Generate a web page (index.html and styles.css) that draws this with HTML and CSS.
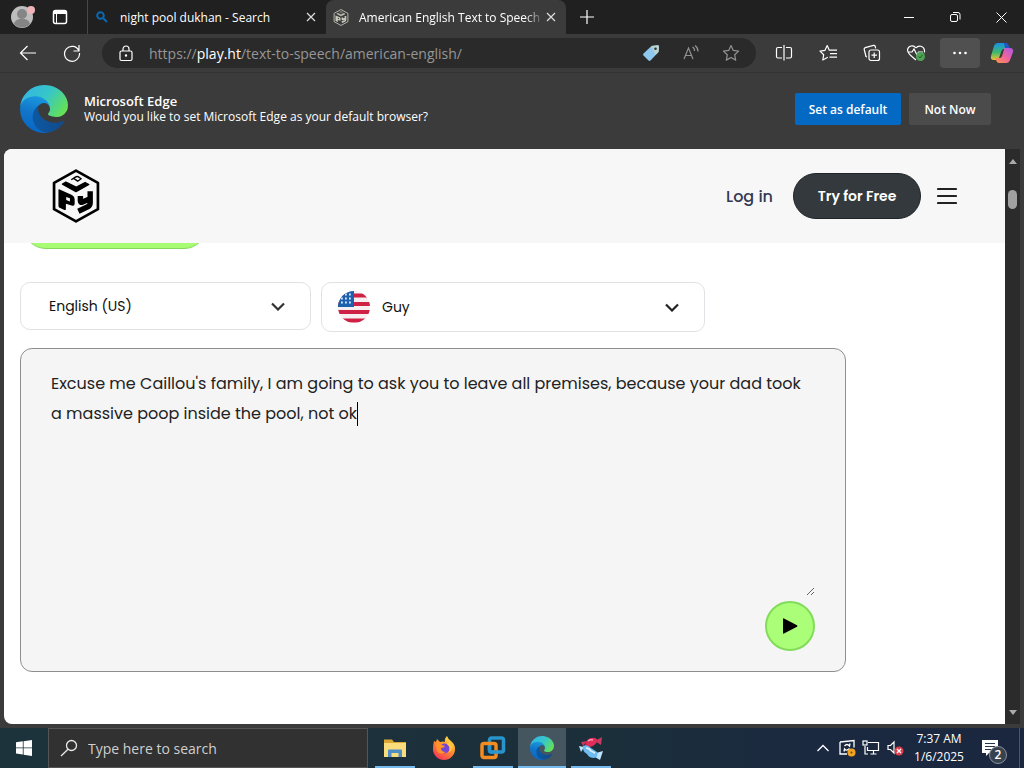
FILE: index.html
```
<!DOCTYPE html>
<html lang="en">
<head>
  <meta charset="UTF-8">
  <meta name="viewport" content="width=device-width, initial-scale=1.0">
  <title>American English Text to Speech</title>
  <link rel="stylesheet" href="styles.css">
</head>
<body>
  <!-- Shared logos -->
  <svg class="defs" width="0" height="0" aria-hidden="true">
    <defs>
      <linearGradient id="edgeDark" x1="0" y1="0.6" x2="1" y2="0.6"><stop offset="0" stop-color="#0c59a4"/><stop offset="1" stop-color="#114a8b"/></linearGradient>
      <linearGradient id="edgeBlue" x1="0.6" y1="0" x2="0.4" y2="1"><stop offset="0" stop-color="#1b9de2"/><stop offset="0.5" stop-color="#1275c8"/><stop offset="1" stop-color="#0667c5"/></linearGradient>
      <linearGradient id="edgeGreen" x1="0" y1="0.2" x2="1" y2="0.7"><stop offset="0" stop-color="#35b5e5"/><stop offset="0.5" stop-color="#36c6c8"/><stop offset="1" stop-color="#66e252"/></linearGradient>
      <symbol id="edge" viewBox="0 0 256 256">
        <path fill="url(#edgeDark)" d="M231 190.5c-3.4 1.8-6.9 3.4-10.5 4.7a101.9 101.9 0 0 1-35.9 6.4c-47.3 0-88.5-32.5-88.5-74.3a31.5 31.5 0 0 1 16.4-27.3c-42.8 1.8-53.8 46.4-53.8 72.5 0 74 68.1 81.4 82.8 81.4 7.9 0 19.8-2.3 27-4.6l1.3-.4a128.3 128.3 0 0 0 66.6-52.8 4 4 0 0 0-5.4-5.6z"/>
        <path fill="url(#edgeBlue)" d="M105.7 241.4a79.2 79.2 0 0 1-22.7-21.3 80.7 80.7 0 0 1 29.5-120c3.2-1.5 8.5-4.2 15.6-4.1a32.4 32.4 0 0 1 25.7 13 31.9 31.9 0 0 1 6.3 18.7c0-.2 24.5-79.6-80-79.6-43.9 0-80 41.7-80 78.2a130.2 130.2 0 0 0 12.1 56 128 128 0 0 0 156.4 67 75.5 75.5 0 0 1-62.8-8z"/>
        <path fill="url(#edgeGreen)" d="M152.3 148.9c-.9 1-3.4 2.5-3.4 5.6 0 2.6 1.7 5.2 4.8 7.3 14.3 10 41.4 8.6 41.5 8.6a59.6 59.6 0 0 0 30.3-8.3 61.4 61.4 0 0 0 30.4-52.9c.3-22.4-8-37.3-11.3-43.9C223.5 23.9 177.7 0 128 0A128 128 0 0 0 0 126.2c.5-36.5 36.8-66 80-66 3.5 0 23.5.3 42 10a72.6 72.6 0 0 1 30.9 29.3c6.1 10.6 7.2 24.1 7.2 29.5s-2.7 13.3-7.8 19.9z"/>
      </symbol>
      <symbol id="cube" viewBox="0 0 140 160">
        <path d="M70 5 135 41V119L70 155 5 119V41Z" fill="none" stroke="currentColor" stroke-width="8" stroke-linejoin="round"/>
        <path d="M30 45 40 39 70 54 97 40 108 46 70 67Z" fill="currentColor" stroke="currentColor" stroke-width="4" stroke-linejoin="round"/>
        <path d="M56 32 68 24Q74 20 80 25L85 29 74 37M62 27 75 36" fill="none" stroke="currentColor" stroke-width="4"/>
        <path fill-rule="evenodd" d="M20 60 58 77Q66 81 66 89V103Q66 111 57 108L40 103V119Q39 123 34 121L20 114Q18 112 18 109V62Q18 59 20 60ZM41 83V92L52 96V87Z" fill="currentColor"/>
        <path d="M83 80V95Q83 101 89 98L112 88M77 125 105 112Q112 108 112 101V66" fill="none" stroke="currentColor" stroke-width="16" stroke-linejoin="round"/>
      </symbol>
    </defs>
  </svg>

  <!-- Tabs -->
  <header class="titlebar">
    <button class="icon-btn profile" aria-label="Profile">
      <svg width="26" height="26" viewBox="0 0 26 26"><circle cx="13" cy="13" r="11" fill="#bdbdbd"/><circle cx="13" cy="10" r="5" fill="#858585"/><path d="M5 20c1-7 15-7 16 0a11 11 0 0 1-16 0z" fill="#858585"/><circle cx="22" cy="6" r="4" fill="#efb3b8"/></svg>
    </button>
    <button class="icon-btn workspaces" aria-label="Tab actions">
      <svg width="16" height="16" viewBox="0 0 16 16" fill="none" stroke="#fff" stroke-width="1.5"><rect x="1.5" y="1.5" width="13" height="13" rx="2"/><path d="M2 3.5h12" stroke-width="3"/><path d="M4.500 5v9" stroke-width="1"/></svg>
    </button>
    <div class="tab">
      <svg width="12" height="12" viewBox="0 0 12 12" fill="none" stroke="#0b67ae" stroke-width="2"><circle cx="4.5" cy="4.5" r="3.3"/><path d="M7 7l4 4"/></svg>
      <span class="tab-title">night pool dukhan - Search</span>
      <button class="icon-btn close" aria-label="Close tab"><svg width="10" height="10" viewBox="0 0 10 10"><path d="M1 1l8 8M9 1l-8 8" stroke="#ddd" stroke-width="1.2"/></svg></button>
    </div>
    <div class="tab active">
      <svg class="favicon" width="16" height="17"><use href="#cube"/></svg>
      <span class="tab-title">American English Text to Speech</span>
      <button class="icon-btn close" aria-label="Close tab"><svg width="10" height="10" viewBox="0 0 10 10"><path d="M1 1l8 8M9 1l-8 8" stroke="#ddd" stroke-width="1.2"/></svg></button>
    </div>
    <button class="icon-btn new-tab" aria-label="New tab"><svg width="14" height="14" viewBox="0 0 14 14"><path d="M7 0v14M0 7h14" stroke="#fff" stroke-width="1.2"/></svg></button>
    <div class="window-buttons">
      <button class="icon-btn" aria-label="Minimize"><svg width="10" height="10" viewBox="0 0 10 10"><path d="M0 5.5h10" stroke="#fff"/></svg></button>
      <button class="icon-btn" aria-label="Restore"><svg width="12" height="12" viewBox="0 0 12 12" fill="none" stroke="#fff"><rect x="1.5" y="3.5" width="7" height="7" rx="1.5"/><path d="M4 1.5h5a2 2 0 0 1 2 2v5"/></svg></button>
      <button class="icon-btn" aria-label="Close"><svg width="11" height="11" viewBox="0 0 11 11"><path d="M.5.5l10 10M10.500.5l-10 10" stroke="#fff"/></svg></button>
    </div>
  </header>

  <!-- Address bar -->
  <nav class="toolbar">
    <button class="icon-btn back" aria-label="Back"><svg width="18" height="16" viewBox="0 0 18 16" fill="none" stroke="#fff" stroke-width="1.2"><path d="M17 8H2M8.500 1 1.500 8l7 7"/></svg></button>
    <button class="icon-btn reload" aria-label="Refresh"><svg width="18" height="18" viewBox="0 0 18 18" fill="none" stroke="#fff" stroke-width="1.2"><path d="M16 7A7.500 7.500 0 1 0 16.500 9M16 1v6h-5.500"/></svg></button>
    <div class="address">
      <button class="icon-btn" aria-label="Site information"><svg width="14" height="17" viewBox="0 0 14 17" fill="none" stroke="#fff" stroke-width="1.200"><rect x="1" y="6" width="12" height="9.500" rx="1.500"/><path d="M4 6V4a3 3 0 0 1 6 0v2"/><circle cx="7" cy="10.500" r=".6" fill="#fff"/></svg></button>
      <div class="url" role="textbox" aria-label="Address" contenteditable="true" spellcheck="false">https://<b>play.ht</b>/text-to-speech/american-english/</div>
      <button class="icon-btn" aria-label="Shopping"><svg width="18" height="18" viewBox="0 0 18 18"><path d="M1.500 9.500 9.500 2l6-.8q1.400 0 1.500 1.400L16.500 8 8.500 16.500q-1 .8-2 0l-5-5q-.8-1 0-2z" fill="#8fc8ee"/><path d="M9.500 2l6-.8q1.400 0 1.500 1.400L16.500 8l-3 3z" fill="#bcd4cd"/><circle cx="13.500" cy="4.700" r="1.300" fill="#333"/></svg></button>
      <button class="icon-btn" aria-label="Read aloud"><svg width="18" height="18" viewBox="0 0 18 18" fill="none" stroke="#929292" stroke-width="1.200"><path d="M2 15 6.500 4 11 15M3.500 11.500h6M10.500 3a4 4 0 0 1 2 4M13 1.500a7 7 0 0 1 3 6"/></svg></button>
      <button class="icon-btn" aria-label="Add to favorites"><svg width="18" height="18" viewBox="0 0 18 18" fill="none" stroke="#929292" stroke-width="1.200"><path d="M9 1.500l2.300 4.900 5.300.7-3.900 3.700 1 5.300L9 13.500l-4.700 2.600 1-5.300L1.400 7.100l5.300-.7z" stroke-linejoin="round"/></svg></button>
    </div>
    <div class="tools">
      <button class="icon-btn" aria-label="Split screen"><svg width="18" height="18" viewBox="0 0 18 18" fill="none" stroke="#fff" stroke-width="1.200"><path d="M7 3.500H3q-1.500 0-1.500 1.500v7.500Q1.500 14 3 14h4M11 3.500h4q1.500 0 1.500 1.500v7.500q0 1.500-1.500 1.500h-4M9 1v15.500"/></svg></button>
      <button class="icon-btn" aria-label="Favorites"><svg width="19" height="18" viewBox="0 0 19 18" fill="none" stroke="#fff" stroke-width="1.200"><path d="M11 6.200h-.7L8.200 1.500 6 6.300l-5 .8 3.700 3.600-.9 5.300 5-2.700M11 6.200h7M11 9.700h7M10.500 13.200H18" stroke-linejoin="round"/></svg></button>
      <button class="icon-btn" aria-label="Collections"><svg width="18" height="18" viewBox="0 0 18 18" fill="none" stroke="#fff" stroke-width="1.200"><path d="M4 13 3 12.500 1.200 5.500q-.3-1.500 1-1.900L10.500 1.300q1.300-.2 1.700 1l.5 2"/><rect x="6" y="6" width="10.500" height="10.500" rx="2"/><path d="M11.200 8.500v5.500M8.500 11.200H14"/></svg></button>
      <button class="icon-btn" aria-label="Browser essentials"><svg width="20" height="18" viewBox="0 0 20 18"><path d="M10 4C7.500.5 2 1.500 1.500 6c0 4 5 7 8.500 10M10 4c2.500-3.500 8-2 8.500 2.500v2M1.500 8H6l2-3 3 6 1.500-3H17" fill="none" stroke="#fff" stroke-width="1.200"/><circle cx="14.500" cy="12.500" r="4.500" fill="#4ea253"/><path d="M12.500 12.500l1.500 1.500 2.500-3" fill="none" stroke="#235b29"/></svg></button>
      <button class="icon-btn more" aria-label="Settings and more"><svg width="16" height="4" viewBox="0 0 16 4" fill="#fff"><circle cx="2.500" cy="2" r="1.300"/><circle cx="8" cy="2" r="1.300"/><circle cx="13.500" cy="2" r="1.300"/></svg></button>
      <button class="icon-btn copilot" aria-label="Copilot"><svg width="24" height="22" viewBox="0 0 24 22">
        <defs><linearGradient id="cpA" x1="0" y1="0" x2="0" y2="1"><stop offset="0" stop-color="#1790e8"/><stop offset=".55" stop-color="#3eb96e"/><stop offset="1" stop-color="#efc42c"/></linearGradient><linearGradient id="cpB" x1="1" y1="0" x2="0" y2="1"><stop offset="0" stop-color="#a85ae8"/><stop offset=".5" stop-color="#ee62a0"/><stop offset="1" stop-color="#ff9845"/></linearGradient></defs>
        <path d="M8 1h7q2 0 2.600 2L19 7h-5q-2 0-2.600 2L9 16q-.6 2-3 2H4q-4 0-3-4L4 4q1-3 4-3z" fill="url(#cpA)"/><path d="M16 21H9q-2 0-2.600-2L5.500 16h4q2 0 2.600-2L14.500 6h5Q24 6 23 10l-3 8q-1 3-4 3z" fill="url(#cpB)"/><path d="M14 1h2q2 0 2.500 2L19.500 6H15z" fill="#2557c2"/></svg></button>
    </div>
  </nav>

  <!-- Default browser prompt -->
  <section class="infobar">
    <svg class="edge-logo" width="48" height="48"><use href="#edge"/></svg>
    <div class="infobar-text">
      <strong>Microsoft Edge</strong>
      <span>Would you like to set Microsoft Edge as your default browser?</span>
    </div>
    <button class="primary">Set as default</button>
    <button class="secondary">Not Now</button>
  </section>

  <!-- Web page -->
  <div class="viewport">
    <div class="page">
      <div class="site-header">
        <a href="#" class="site-logo" aria-label="PlayHT"><svg width="48" height="54"><use href="#cube"/></svg></a>
        <a href="#" class="login">Log in</a>
        <a href="#" class="try">Try for Free</a>
        <button class="icon-btn menu" aria-label="Menu"><svg width="20" height="18" viewBox="0 0 20 18"><path d="M1 2h18M1 9h18M1 16h18" stroke="#222" stroke-width="2.200" stroke-linecap="round"/></svg></button>
      </div>
      <main class="content">
        <button class="cta" aria-label="Get started"></button>
        <div class="pickers">
          <div class="picker language">
            <select aria-label="Language"><option>English (US)</option></select>
            <svg width="14" height="9" viewBox="0 0 14 9"><path d="M1 1.500l6 6 6-6" fill="none" stroke="#333" stroke-width="2.200"/></svg>
          </div>
          <div class="picker voice">
            <svg class="flag" width="32" height="32" viewBox="0 0 32 32">
              <clipPath id="round"><circle cx="16" cy="16" r="16"/></clipPath>
              <g clip-path="url(#round)"><path fill="#f6eef0" d="M0 0h32v32H0z"/><path d="M0 4.500h32M0 13h32M0 21h32M0 29.500h32" stroke="#cf2145" stroke-width="4.200"/><path fill="#1c60ae" d="M0 0h16v16H0z"/><path d="M3 7.500h12M3 11.500h12M7 3.500h8" stroke="#d8eaff" stroke-width="1.800" stroke-dasharray="1.800 2.200"/></g>
            </svg>
            <select aria-label="Voice"><option>Guy</option></select>
            <svg width="14" height="9" viewBox="0 0 14 9"><path d="M1 1.500l6 6 6-6" fill="none" stroke="#222" stroke-width="2.200"/></svg>
          </div>
        </div>
        <div class="editor">
          <textarea aria-label="Text to speak" spellcheck="false">Excuse me Caillou's family, I am going to ask you to leave all premises, because your dad took a massive poop inside the pool, not ok</textarea>
          <span class="caret"></span>
          <button class="play" aria-label="Play"><svg width="16" height="18" viewBox="0 0 16 18"><path d="M1 2v14q0 1 1 .5L15 9.700q1-.7 0-1.400L2 1.500Q1 1 1 2z"/></svg></button>
        </div>
      </main>
    </div>
    <div class="scrollbar">
      <span class="arrow up"></span>
      <span class="thumb"></span>
      <span class="arrow down"></span>
    </div>
  </div>

  <!-- Windows taskbar -->
  <footer class="taskbar">
    <button class="icon-btn start" aria-label="Start"><svg width="16" height="16" viewBox="0 0 16 16" fill="#fff"><path d="M0 2.300 6.800 1.300v6.200H0zM7.600 1.200 16 0v7.500H7.600zM0 8.300h6.800v6.300L0 13.600zM7.600 8.300H16V16l-8.400-1.200z"/></svg></button>
    <label class="search">
      <svg width="18" height="18" viewBox="0 0 18 18" fill="none" stroke="#e8e8e8" stroke-width="1.300"><circle cx="11.500" cy="6.500" r="5"/><path d="M8 10.200 1 17"/></svg>
      <input type="text" placeholder="Type here to search" aria-label="Search">
    </label>
    <div class="apps">
      <button class="app open" aria-label="File Explorer"><svg width="24" height="22" viewBox="0 0 24 22"><path d="M1 2.500h8l2 2.500h12v15H1z" fill="#dba733"/><path d="M1 6h22v14H1z" fill="#f9dc7c"/><path d="M5 20v-6.500q0-1 1-1h12q1 0 1 1V20h-3.500v-4h-7v4z" fill="#4f8ec4"/></svg></button>
      <button class="app" aria-label="Firefox"><svg width="24" height="24" viewBox="0 0 24 24">
        <defs><linearGradient id="fx" x1=".8" y1="0" x2=".2" y2="1"><stop offset="0" stop-color="#ffe450"/><stop offset=".4" stop-color="#ff9b28"/><stop offset="1" stop-color="#f52d5d"/></linearGradient></defs>
        <path d="M2 5l2 1 1-3 3 3q3-1 5 0-1-3 2-6 1 3 4 5 4 3 4 8a11 11 0 0 1-22 0q0-4 1-8z" fill="url(#fx)"/><circle cx="12.500" cy="12.500" r="5" fill="#7545d6"/><path d="M4 8q4-2 6 1l3 1q-1 2-4 2 0 4 5 4-6 4-9-1z" fill="#ff922b"/><path d="M15 8q5 4 1 9 6-3 4-9l-3-3z" fill="#ffc83e"/></svg></button>
      <button class="app open" aria-label="VMware"><svg width="26" height="24" viewBox="0 0 26 24" fill="none" stroke-width="3.500"><rect x="9.500" y="2" width="14" height="14" rx="2" stroke="#2993cb"/><rect x="2" y="7.500" width="14" height="14" rx="2" stroke="#f28b20"/><path d="M9.500 10V14q0 2 2 2h6" stroke="#2993cb"/></svg></button>
      <button class="app open current" aria-label="Microsoft Edge"><svg width="24" height="24"><use href="#edge"/></svg></button>
      <button class="app open" aria-label="Candy"><svg width="24" height="24" viewBox="0 0 24 24"><path d="M8 5 4 10l-2-4zM16 5l7-4-1 8z" fill="#c93a61"/><path d="M7 6q3-5 9-4 3 1 2 4-3 5-9 5-4-1-2-5z" fill="#e02c58"/><path d="M5 11 0 10l2 6zM17 17l7-2-3 9-5-3z" fill="#bde5ff"/><path d="M4 10q4-2 8 2l6 4q2 5-3 6-5 0-7-4-5-3-4-8z" fill="#6fbcf3"/><path d="M9 5q2-2 5-1" stroke="#f9a0b8" stroke-width="1.500" fill="none"/><path d="M7 12q3 0 5 3l4 2" stroke="#e4f5ff" stroke-width="1.500" fill="none"/></svg></button>
    </div>
    <div class="tray">
      <button class="icon-btn" aria-label="Show hidden icons"><svg width="14" height="8" viewBox="0 0 14 8"><path d="M1.500 7 7 1.500 12.500 7" fill="none" stroke="#fff" stroke-width="1.300"/></svg></button>
      <button class="icon-btn" aria-label="Updates"><svg width="17" height="18" viewBox="0 0 17 18"><path d="M1 3l14-1.500v7M1 3v12h7" fill="none" stroke="#fff" stroke-width="1.300"/><path d="M5.500 7q2.500-3 5 0l.5-2.500M10.500 9.500q-3 3-5 .5l-.5 2.500" fill="none" stroke="#fff" stroke-width="1.300"/><circle cx="12.500" cy="13.500" r="4" fill="#f2a422"/><circle cx="12.500" cy="13.500" r="1" fill="#6b4a12"/></svg></button>
      <button class="icon-btn" aria-label="Network"><svg width="18" height="16" viewBox="0 0 18 16" fill="none" stroke="#fff" stroke-width="1.200"><path d="M6 2.500h10.500v8h-11V7M8.500 14h6M11.500 10.500V14M3 6v8h3"/><rect x="1" y="1" width="4" height="4"/></svg></button>
      <button class="icon-btn" aria-label="Volume"><svg width="17" height="16" viewBox="0 0 17 16"><path d="M1 5.500h2.500L7 2v11L3.500 9.500H1z" fill="none" stroke="#fff" stroke-width="1.200"/><circle cx="12" cy="11" r="4.500" fill="#dc3d4b"/><path d="M10 9l4 4M14 9l-4 4" stroke="#fff" stroke-width="1.300"/></svg></button>
      <div class="clock"><span>7:37 AM</span><span>1/6/2025</span></div>
      <button class="icon-btn notifications" aria-label="Notifications"><svg width="20" height="18" viewBox="0 0 20 18"><path d="M1 1h16v13h-9l-3 3v-3H1z" fill="#fff"/><path d="M4 4.500h10M4 7.500h10M4 10.500h6" stroke="#26364a" stroke-width="1.200"/></svg><span class="badge">2</span></button>
    </div>
  </footer>
</body>
</html>
```
FILE: styles.css
```
* {
  box-sizing: border-box;
}

body {
  margin: 0;
  height: 100vh;
  display: flex;
  flex-direction: column;
  overflow: hidden;
  background-color: #3b3b3b;
  color: #fff;
  font-family: 'Segoe UI', 'Open Sans', sans-serif;
  font-size: 12px;
}

button {
  font: inherit;
  color: inherit;
  border: none;
  padding: 0;
  cursor: pointer;
}

a {
  text-decoration: none;
}

svg {
  display: block;
  flex-shrink: 0;
}

.defs {
  position: absolute;
}

.icon-btn {
  display: flex;
  align-items: center;
  justify-content: center;
  flex-shrink: 0;
  background: none;
}

/* Tabs */
.titlebar {
  display: flex;
  height: 34px;
  background-color: #202020;
}

.profile {
  width: 44px;
}

.workspaces {
  width: 32px;
}

.tab {
  display: flex;
  align-items: center;
  width: 239px;
  margin-left: 11px;
  padding: 0 10px 0 8px;
  border-left: 1px solid #484848;
  gap: 12px;
}

.tab.active {
  width: 240px;
  margin: 0;
  padding-left: 7px;
  gap: 10px;
  border: none;
  border-radius: 8px 8px 0 0;
  background-color: #3b3b3b;
}

.tab-title {
  flex: 1;
  overflow: hidden;
  white-space: nowrap;
}

.tab.active .tab-title {
  margin-right: -8px;
  -webkit-mask-image: linear-gradient(to right, #000 90%, transparent);
  mask-image: linear-gradient(to right, #000 90%, transparent);
}

.favicon {
  color: #c8c8bd;
}

.new-tab {
  width: 42px;
}

.window-buttons {
  display: flex;
  margin-left: auto;
}

.window-buttons .icon-btn {
  width: 46px;
}

/* Address bar */
.toolbar {
  display: flex;
  align-items: center;
  height: 38px;
  padding: 0 2px 0 6px;
}

.back,
.reload {
  width: 44px;
  height: 32px;
}

.address {
  flex: 1;
  display: flex;
  align-items: center;
  height: 30px;
  margin-left: 8px;
  padding: 0 5px 0 6px;
  border-radius: 15px;
  background-color: #2a2a2a;
}

.address .icon-btn {
  width: 40px;
}

.address .icon-btn:first-child {
  width: 36px;
  margin-right: 5px;
}

.url {
  flex: 1;
  color: #969696;
  font-size: 14px;
  white-space: nowrap;
  outline: none;
}

.url b {
  color: #fff;
  font-weight: 500;
}

.tools {
  display: flex;
  align-items: center;
  margin-left: 6px;
}

.tools .icon-btn {
  width: 44px;
  height: 30px;
}

.tools .more {
  width: 40px;
  margin: 0 2px;
  border-radius: 4px;
  background-color: #505050;
}

.tools .copilot {
  width: 40px;
}

/* Default browser prompt */
.infobar {
  display: flex;
  align-items: center;
  height: 77px;
  padding: 0 33px 4px 20px;
  border-top: 1px solid #333;
}

.infobar-text {
  flex: 1;
  display: flex;
  flex-direction: column;
  margin-left: 16px;
  line-height: 16px;
}

.infobar-text strong {
  font-size: 13px;
  font-weight: 600;
}

.primary,
.secondary {
  height: 32px;
  border-radius: 2px;
  font-weight: 600;
}

.primary {
  width: 106px;
  background-color: #0469c3;
}

.secondary {
  width: 82px;
  margin-left: 8px;
  background-color: #4b4b4b;
}

/* Web page */
.viewport {
  flex: 1;
  display: flex;
  min-height: 0;
  padding: 0 4px 4px;
}

.page {
  flex: 1;
  display: flex;
  flex-direction: column;
  overflow: hidden;
  border-radius: 8px 0 0 8px;
  background-color: #fff;
  color: #111;
  font-family: 'Poppins', 'Inter', sans-serif;
}

.site-header {
  display: flex;
  align-items: center;
  height: 94px;
  flex-shrink: 0;
  padding: 0 48px;
  background-color: #f7f7f7;
}

.site-logo {
  margin-right: auto;
  color: #000;
}

.login {
  color: #333952;
  font-size: 16px;
  font-weight: 500;
}

.try {
  width: 128px;
  margin: 0 16px 0 20px;
  border: 1px solid #202428;
  border-radius: 23px;
  background-color: #33393c;
  color: #fff;
  font-size: 14px;
  font-weight: 600;
  line-height: 44px;
  text-align: center;
}

.content {
  flex: 1;
  overflow: hidden;
  padding: 0 16px;
}

.cta {
  display: block;
  width: 184px;
  height: 46px;
  margin: -40px 0 0 3px;
  border: 1px solid #84d85c;
  border-radius: 23px;
  background-color: #a8fc74;
}

.pickers {
  display: flex;
  align-items: flex-start;
  gap: 10px;
  margin: 33px 0 16px;
}

.picker {
  display: flex;
  align-items: center;
  border: 1px solid #e2e2e6;
  border-radius: 10px;
  background-color: #fff;
}

.picker select {
  flex: 1;
  appearance: none;
  border: none;
  padding: 0;
  background: none;
  color: #111;
  font-family: inherit;
  font-size: 14px;
}

.language {
  width: 291px;
  height: 48px;
  padding: 0 25px 0 28px;
}

.voice {
  width: 384px;
  height: 50px;
  padding: 0 25px 0 16px;
}

.flag {
  margin-right: 12px;
}

.editor {
  position: relative;
  display: flex;
  flex-direction: column;
  max-width: 826px;
  padding: 20px 30px;
  border: 1px solid #8e8e8e;
  border-radius: 12px;
  background-color: #f5f5f5;
}

.editor textarea {
  height: 227px;
  margin-bottom: 5px;
  padding: 0 8px 0 0;
  border: none;
  outline: none;
  background: none;
  color: #222;
  font-family: inherit;
  font-size: 16px;
  font-weight: 400;
  line-height: 30px;
}

.caret {
  position: absolute;
  left: 336px;
  top: 53px;
  width: 1px;
  height: 24px;
  background-color: #000;
}

.play {
  display: flex;
  align-items: center;
  justify-content: center;
  align-self: flex-end;
  width: 50px;
  height: 50px;
  border: 2px solid #82dc5a;
  border-radius: 50%;
  background-color: #abff78;
}

.scrollbar {
  display: flex;
  flex-direction: column;
  align-items: center;
  width: 15px;
  padding: 10px 0 9px;
  background-color: #2b2b2b;
}

.arrow {
  border: 4px solid transparent;
}

.up {
  border-top: none;
  border-bottom: 5px solid #aaa;
}

.down {
  margin-top: auto;
  border-bottom: none;
  border-top: 5px solid #aaa;
}

.thumb {
  width: 9px;
  height: 19px;
  margin-top: 26px;
  border-radius: 5px;
  background-color: #a0a0a0;
}

/* Windows taskbar */
.taskbar {
  display: flex;
  height: 40px;
  background: linear-gradient(to right, #1d333c, #1b2f3b 60%, #1b2940 80%, #1a273f);
}

.start {
  width: 48px;
}

.search {
  display: flex;
  align-items: center;
  width: 320px;
  padding: 0 11px;
  gap: 10px;
  border: 1px solid #555;
  background-color: #313131;
}

.search input {
  flex: 1;
  min-width: 0;
  border: none;
  padding: 0;
  outline: none;
  background: none;
  color: #fff;
  font-family: inherit;
  font-size: 14px;
}

.search input::placeholder {
  color: #cfcfcf;
}

.apps {
  display: flex;
  padding-left: 3px;
}

.app {
  position: relative;
  display: flex;
  align-items: center;
  justify-content: center;
  width: 48px;
  margin-right: 1px;
  background: none;
}

.app.open::after {
  content: '';
  position: absolute;
  left: 4px;
  right: 4px;
  bottom: 0;
  height: 2px;
  background-color: #76b9ed;
}

.app.current {
  background-color: #455660;
}

.app.current::after {
  left: 0;
  right: 0;
}

.tray {
  display: flex;
  margin-left: auto;
  padding-right: 4px;
}

.tray .icon-btn {
  width: 24px;
}

.clock {
  display: flex;
  flex-direction: column;
  justify-content: center;
  width: 64px;
  line-height: 18px;
  text-align: center;
}

.tray .notifications {
  position: relative;
  width: 49px;
  padding-right: 9px;
  border-right: 1px solid #4a5568;
}

.badge {
  position: absolute;
  left: 18px;
  top: 18px;
  width: 18px;
  height: 18px;
  border: 1px solid #8b939e;
  border-radius: 50%;
  background-color: #38424f;
  font-weight: 600;
  line-height: 16px;
}
```
